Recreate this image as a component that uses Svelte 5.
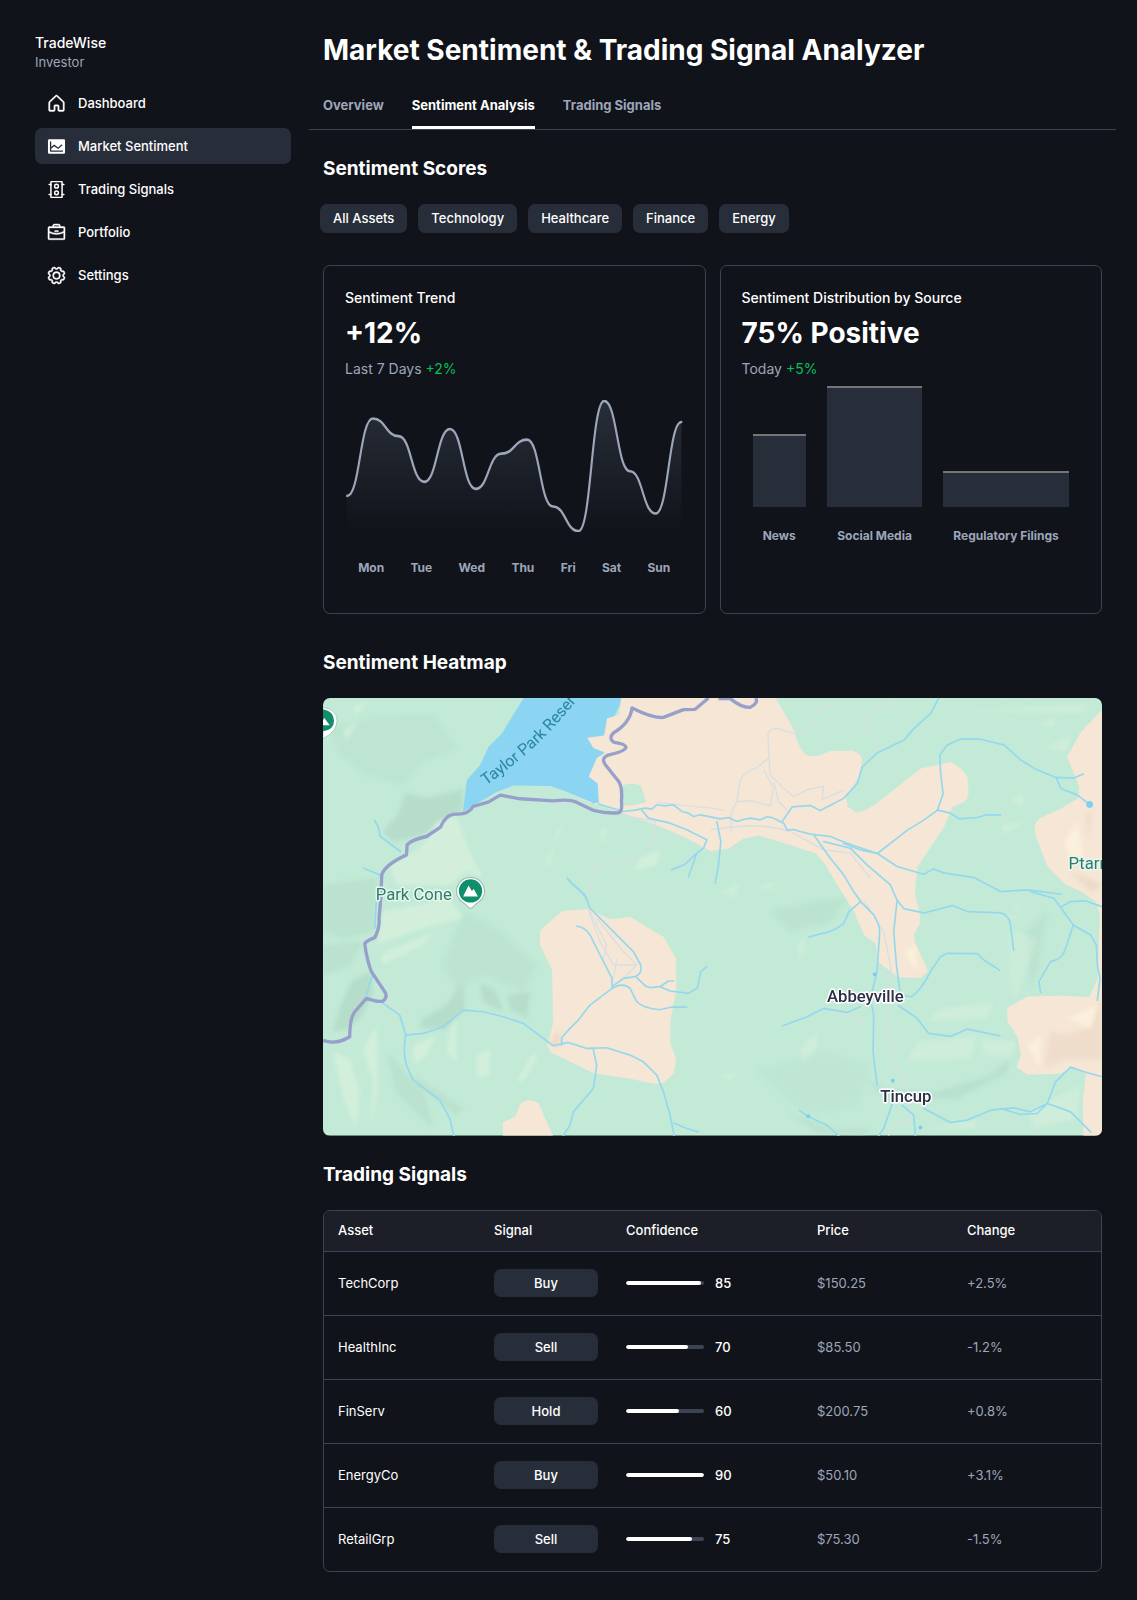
<script>
  const nav = [
    { label: 'Dashboard', icon: 'home' },
    { label: 'Market Sentiment', icon: 'chart', active: true },
    { label: 'Trading Signals', icon: 'traffic' },
    { label: 'Portfolio', icon: 'briefcase' },
    { label: 'Settings', icon: 'gear' },
  ];
  const tabs = ['Overview', 'Sentiment Analysis', 'Trading Signals'];
  const filters = ['All Assets', 'Technology', 'Healthcare', 'Finance', 'Energy'];
  const days = ['Mon', 'Tue', 'Wed', 'Thu', 'Fri', 'Sat', 'Sun'];
  const sources = [
    { label: 'News', height: 60 },
    { label: 'Social Media', height: 100 },
    { label: 'Regulatory Filings', height: 30 },
  ];
  const signals = [
    { asset: 'TechCorp', signal: 'Buy', confidence: 85, price: '$150.25', change: '+2.5%' },
    { asset: 'HealthInc', signal: 'Sell', confidence: 70, price: '$85.50', change: '-1.2%' },
    { asset: 'FinServ', signal: 'Hold', confidence: 60, price: '$200.75', change: '+0.8%' },
    { asset: 'EnergyCo', signal: 'Buy', confidence: 90, price: '$50.10', change: '+3.1%' },
    { asset: 'RetailGrp', signal: 'Sell', confidence: 75, price: '$75.30', change: '-1.5%' },
  ];
  let activeTab = $state('Sentiment Analysis');

  const line =
    'M0 109C18.15 109 18.15 21 36.31 21C54.46 21 54.46 41 72.62 41C90.77 41 90.77 93 108.92 93C127.08 93 127.08 33 145.23 33C163.38 33 163.38 101 181.54 101C199.69 101 199.69 61 217.85 61C236 61 236 45 254.15 45C272.31 45 272.31 121 290.46 121C308.62 121 308.62 149 326.77 149C344.92 149 344.92 1 363.08 1C381.23 1 381.23 81 399.38 81C417.54 81 417.54 129 435.69 129C453.85 129 453.85 25 472 25';
</script>

<div class="page">
  <aside class="sidebar">
    <div class="brand">
      <p class="name">TradeWise</p>
      <p class="role">Investor</p>
    </div>
    <nav>
      {#each nav as item}
        <a href="#{item.icon}" class="nav-item" class:active={item.active}>
          <svg class="icon" viewBox="0 0 256 256" fill="currentColor" stroke="currentColor" aria-hidden="true">
            {#if item.icon === 'home'}
              <path stroke-width="5" d="M218.83,103.77l-80-75.48a1.14,1.14,0,0,1-.11-.11,16,16,0,0,0-21.53,0l-.11.11L37.17,103.77A16,16,0,0,0,32,115.55V208a16,16,0,0,0,16,16H96a16,16,0,0,0,16-16V160h32v48a16,16,0,0,0,16,16h48a16,16,0,0,0,16-16V115.55A16,16,0,0,0,218.83,103.77ZM208,208H160V160a16,16,0,0,0-16-16H112a16,16,0,0,0-16,16v48H48V115.55l.11-.1L128,40l79.9,75.43.11.1Z" />
            {:else if item.icon === 'chart'}
              <path stroke="none" d="M216,40H40A16,16,0,0,0,24,56V200a16,16,0,0,0,16,16H216a16,16,0,0,0,16-16V56A16,16,0,0,0,216,40ZM200,192H56a8,8,0,0,1-8-8V72a8,8,0,0,1,16,0v62.08l30.4-26.6a8,8,0,0,1,10.13-.32l43,32.26,39.2-34.3a8,8,0,1,1,10.54,12l-44,38.5a8,8,0,0,1-10.07.38l-43-32.26L64,155.63V176H200a8,8,0,0,1,0,16Z" />
            {:else if item.icon === 'traffic'}
              <g fill="none" stroke-width="18" stroke-linecap="round" stroke-linejoin="round">
                <rect x="60" y="32" width="136" height="192" rx="6" />
                <circle cx="128" cy="88" r="23" />
                <circle cx="128" cy="168" r="23" />
                <path d="M60 66H38M60 190H38M196 66H218M196 190H218" />
              </g>
            {:else if item.icon === 'briefcase'}
              <path stroke-width="5" d="M216,56H176V48a24,24,0,0,0-24-24H104A24,24,0,0,0,80,48v8H40A16,16,0,0,0,24,72V200a16,16,0,0,0,16,16H216a16,16,0,0,0,16-16V72A16,16,0,0,0,216,56ZM96,48a8,8,0,0,1,8-8h48a8,8,0,0,1,8,8v8H96ZM216,72v41.61A184,184,0,0,1,128,136a184.070,184.070,0,0,1-88-22.380V72Zm0,128H40V131.640A200.190,200.190,0,0,0,128,152a200.250,200.250,0,0,0,88-20.370V200ZM104,112a8,8,0,0,1,8-8h32a8,8,0,0,1,0,16H112A8,8,0,0,1,104,112Z" />
            {:else}
              <path stroke-width="5" d="M128,80a48,48,0,1,0,48,48A48.050,48.050,0,0,0,128,80Zm0,80a32,32,0,1,1,32-32A32,32,0,0,1,128,160Zm88-29.840q.06-2.160,0-4.320l14.920-18.640a8,8,0,0,0,1.480-7.060,107.600,107.600,0,0,0-10.880-26.250,8,8,0,0,0-6-3.930l-23.720-2.640q-1.480-1.560-3-3L186,40.540a8,8,0,0,0-3.940-6,107.290,107.290,0,0,0-26.250-10.860,8,8,0,0,0-7.060,1.480L130.160,40Q128,40,125.840,40L107.200,25.110a8,8,0,0,0-7.060-1.480A107.600,107.600,0,0,0,73.890,34.510a8,8,0,0,0-3.930,6L67.320,64.270q-1.560,1.490-3,3L40.540,70a8,8,0,0,0-6,3.940,107.710,107.710,0,0,0-10.870,26.250,8,8,0,0,0,1.490,7.060L40,125.840Q40,128,40,130.160L25.110,148.800a8,8,0,0,0-1.480,7.060,107.600,107.600,0,0,0,10.880,26.250,8,8,0,0,0,6,3.930l23.720,2.640q1.490,1.560,3,3L70,215.460a8,8,0,0,0,3.940,6,107.710,107.710,0,0,0,26.250,10.870,8,8,0,0,0,7.060-1.490L125.840,216q2.160.06,4.320,0l18.640,14.920a8,8,0,0,0,7.060,1.480,107.210,107.210,0,0,0,26.250-10.880,8,8,0,0,0,3.930-6l2.640-23.720q1.560-1.480,3-3L215.460,186a8,8,0,0,0,6-3.940,107.710,107.710,0,0,0,10.870-26.250,8,8,0,0,0-1.490-7.060Zm-16.100-6.500a73.930,73.930,0,0,1,0,8.680,8,8,0,0,0,1.740,5.480l14.190,17.730a91.570,91.570,0,0,1-6.230,15L187,173.110a8,8,0,0,0-5.100,2.640,74.110,74.110,0,0,1-6.140,6.140,8,8,0,0,0-2.640,5.100l-2.510,22.580a91.320,91.320,0,0,1-15,6.230l-17.740-14.190a8,8,0,0,0-5-1.750h-.48a73.930,73.930,0,0,1-8.680,0,8.060,8.060,0,0,0-5.480,1.740L100.450,215.800a91.570,91.570,0,0,1-15-6.230L82.890,187a8,8,0,0,0-2.640-5.100,74.110,74.110,0,0,1-6.140-6.140,8,8,0,0,0-5.100-2.640L46.430,170.600a91.320,91.320,0,0,1-6.230-15l14.190-17.740a8,8,0,0,0,1.740-5.480,73.930,73.930,0,0,1,0-8.680,8,8,0,0,0-1.740-5.480L40.200,100.450a91.570,91.570,0,0,1,6.230-15L69,82.890a8,8,0,0,0,5.100-2.640,74.110,74.110,0,0,1,6.140-6.140A8,8,0,0,0,82.890,69L85.400,46.430a91.320,91.320,0,0,1,15-6.230l17.740,14.190a8,8,0,0,0,5.480,1.740,73.930,73.930,0,0,1,8.680,0,8.060,8.060,0,0,0,5.480-1.740L155.550,40.200a91.570,91.570,0,0,1,15,6.230L173.110,69a8,8,0,0,0,2.640,5.100,74.110,74.110,0,0,1,6.140,6.140,8,8,0,0,0,5.100,2.640l22.580,2.510a91.320,91.320,0,0,1,6.230,15l-14.190,17.740A8,8,0,0,0,199.870,123.660Z" />
            {/if}
          </svg>
          {item.label}
        </a>
      {/each}
    </nav>
  </aside>

  <main>
    <h1>Market Sentiment &amp; Trading Signal Analyzer</h1>

    <div class="tabs" role="tablist">
      {#each tabs as tab}
        <button
          role="tab"
          class="tab"
          class:selected={tab === activeTab}
          aria-selected={tab === activeTab}
          onclick={() => (activeTab = tab)}>{tab}</button>
      {/each}
    </div>

    <h2>Sentiment Scores</h2>
    <div class="chips">
      {#each filters as filter}
        <button class="chip">{filter}</button>
      {/each}
    </div>

    <div class="cards">
      <section class="card">
        <h3>Sentiment Trend</h3>
        <p class="value">+12%</p>
        <p class="meta">Last 7 Days <span class="up">+2%</span></p>
        <svg class="trend" viewBox="-3 0 478 150" preserveAspectRatio="none" role="img" aria-label="Sentiment trend over the last 7 days">
          <defs>
            <linearGradient id="trend-fill" x1="236" y1="1" x2="236" y2="149" gradientUnits="userSpaceOnUse">
              <stop stop-color="#282e39" />
              <stop offset="1" stop-color="#282e39" stop-opacity="0" />
            </linearGradient>
          </defs>
          <path d="{line}V149H0V109Z" fill="url(#trend-fill)" />
          <path d={line} fill="none" stroke="#9da6b9" stroke-width="3" stroke-linecap="round" />
        </svg>
        <div class="days">
          {#each days as day}<span>{day}</span>{/each}
        </div>
      </section>

      <section class="card">
        <h3>Sentiment Distribution by Source</h3>
        <p class="value">75% Positive</p>
        <p class="meta">Today <span class="up">+5%</span></p>
        <div class="bars">
          {#each sources as source}
            <div class="source">
              <div class="slot"><div class="bar" style:height="{source.height}%"></div></div>
              <span>{source.label}</span>
            </div>
          {/each}
        </div>
      </section>
    </div>

    <h2 class="heatmap-title">Sentiment Heatmap</h2>
    <svg class="map" viewBox="0 0 2334 1311" preserveAspectRatio="xMidYMid slice" role="img" aria-label="Map around Taylor Park Reservoir, Abbeyville and Tincup">
      <defs>
        <filter id="soft" x="-20%" y="-20%" width="140%" height="140%"><feGaussianBlur stdDeviation="7" /></filter>
        <path id="lake-label" d="M488 262Q621 168 696 83T826 -72" />
      </defs>
      <rect width="2334" height="1311" fill="#c2ead7" />

      <g fill="#b3d9c7" filter="url(#soft)" opacity="0.8">
        <path d="M245 285L310 300 420 275 415 340 370 370 300 410 210 430 180 400 225 350Z" />
        <path d="M85 850L140 820 150 880 110 960 70 990 30 1000 50 930Z" />
        <path d="M300 960L370 920 420 850 425 930 370 990 290 990ZM470 850L520 880 540 940 480 910ZM555 890L620 880 610 960 560 930Z" />
        <path d="M0 560L160 540 150 700 60 720 0 700ZM0 740L120 730 80 800 0 830Z" opacity="0.6" />
        <path d="M420 640L520 690 640 800 600 880 480 830 400 880 360 800Z" opacity="0.4" />
        <path d="M190 1060L300 1180 330 1290 220 1180ZM270 1130L420 1230 400 1250 280 1160Z" opacity="0.6" />
        <path d="M20 90L150 60 330 50 400 150 300 190 240 260 130 230 40 160Z" opacity="0.35" />
        <path d="M1340 640L1480 610 1570 600 1520 670 1400 700Z" opacity="0.5" />
        <path d="M1610 1130L1690 1180 1840 1180 2000 1130 2060 1080 2050 1120 1900 1200 1690 1200Z" opacity="0.7" />
        <path d="M1390 1240L1520 1290 1640 1290 1620 1311 1480 1300Z" opacity="0.6" />
        <path d="M2110 700L2170 640 2140 820 2120 880Z" opacity="0.5" />
        <path d="M1300 1120L1500 1060 1640 1100 1600 1220 1450 1250Z" opacity="0.25" />
      </g>
      <g fill="#d8f1dd" filter="url(#soft)" opacity="0.75">
        <path d="M340 370L400 350 430 440 480 540 430 520 380 560 220 560 200 500 290 450Z" />
        <path d="M180 640L380 600 420 660 300 690 160 740ZM170 770L330 700 300 740 180 800Z" />
        <path d="M30 1060L80 1080 110 1180 100 1290 60 1200ZM120 1050L160 980 165 1180 140 1290 150 1150Z" />
        <path d="M380 990L400 960 400 1090 370 1060ZM460 1070L500 1050 500 1130 460 1140ZM580 1150L630 1060 640 1080 600 1150ZM270 1040L340 1010 310 1070 270 1100Z" />
        <path d="M700 420L730 350 700 400 680 500 665 500ZM830 400L850 380 840 440ZM950 480L1010 450 1000 500 930 520Z" />
        <path d="M70 130L110 60 60 100ZM90 30L140 0 100 50Z" />
        <path d="M1880 38L2290 20 2280 45ZM2140 80L2200 55 2190 90ZM2160 150L2240 110 2230 160ZM2060 310L2100 280 2100 330ZM2030 380L2110 370 2040 410Z" opacity="0.7" />
        <path d="M1190 580L1250 550 1230 600ZM1300 560L1370 550 1330 580ZM1200 620L1210 620 1230 670Z" opacity="0.6" />
        <path d="M1850 930L2010 910 1990 960 1810 970ZM1780 1030L1960 1010 1940 1080 1750 1090ZM1970 1020L2080 1030 2060 1080 1980 1070Z" opacity="0.7" />
        <path d="M1420 740L1450 710 1430 800ZM1430 1050L1480 1000 1480 1050 1440 1090ZM1190 1130L1240 1120 1220 1150Z" opacity="0.7" />
        <path d="M2050 690L2140 720 2080 900 2060 880ZM1970 640L2100 620 2080 670ZM2000 640L2140 660 2020 620Z" opacity="0.5" />
        <path d="M1800 1290L1960 1260 1950 1290ZM2110 1240L2270 1160 2260 1260 2130 1290Z" opacity="0.7" />
      </g>

      <path fill="#8bd4f2" d="M601 0L536 106 496 146 471 201 431 246 419 341 455 320 521 281 571 262 681 264 729 280 801 316 840 320 840 120 900 0Z" />
      <g fill="#f5e6d5">
        <path d="M893 0H1356L1406 86 1426 141Q1440 174 1461 174L1481 174 1521 159 1586 158Q1610 165 1616 184L1606 236 1569 296 1571 324 1598 343Q1630 335 1651 321L1721 266 1791 211 1881 192Q1920 212 1931 238L1934 286Q1930 308 1916 314L1886 326 1861 386 1781 506 1773 586 1789 646 1789 676 1771 706 1773 731 1813 818 1791 839 1721 836 1664 791 1656 736 1621 711 1589 636 1541 561 1506 501 1476 466 1401 441 1306 412 1261 421 1216 451 1161 459 1091 421 1011 386 901 346 821 320 729 281 801 316 826 314 823 256 796 236 820 180 846 164 810 150 791 119 842 112 851 61 886 51Z" />
        <path d="M2334 36L2271 101 2229 176 2266 266 2261 301 2211 331 2146 361 2131 381 2136 416 2171 506 2221 556 2281 586 2316 611 2327 650 2321 841 2296 896 2211 891 2111 894 2049 928 2051 971 2081 1016 2091 1071 2078 1106 2111 1129 2211 1126 2241 1106 2286 1126 2276 1206 2278 1311H2334Z" />
        <path d="M651 696L716 638 791 632 861 663 921 656 1021 716 1058 781 1058 876 1041 966 1041 1036 1058 1081 1051 1126 1021 1153 991 1156 921 1141 811 1124 681 1061 671 1041 689 976 686 816 649 736Z" />
        <path d="M539 1311L538 1271 576 1254 591 1216Q616 1195 646 1214L666 1261 689 1311Z" />
      </g>
      <path fill="#c2ead7" d="M896 262Q925 252 952 262L968 312 925 322 893 322Z" />
      <g filter="url(#soft)" fill="#ecd9c6">
        <path d="M2180 1000L2230 1010 2290 990 2334 900 2334 1080 2230 1080 2160 1110Z" opacity="0.7" />
        <path d="M690 1010L710 1000 705 1050 685 1040Z" />
        <path d="M2285 350L2300 340 2295 430ZM2240 520L2334 560 2300 580Z" />
      </g>
      <g filter="url(#soft)" fill="#fbf0dc">
        <path d="M2220 430L2260 370 2280 480 2240 490ZM2230 960L2320 920 2300 990ZM1740 760L1775 740 1780 820ZM2110 1040L2150 1010 2150 1110Z" />
      </g>

      <!-- tracks -->
      <g fill="none" stroke="#d8dfe2" stroke-width="4" stroke-linejoin="round">
        <path d="M680 305L705 335 725 310M896 350L995 370 990 430 930 480 860 500 815 505 800 560 790 600 800 650 830 730 870 800 940 800" />
        <path d="M1000 313L1161 330 1200 336M1161 395Q1300 370 1400 400L1500 455 1580 465 1640 540M1222 400V350L1240 310 1250 245Q1270 215 1295 212L1336 180 1333 105Q1345 88 1370 93L1410 107Q1450 105 1472 85L1475 50 1530 10M1240 310L1285 308 1340 324 1350 270 1320 215M1336 180L1340 230 1380 270 1410 296 1450 275 1500 265 1495 305 1560 275M1352 255L1365 310 1390 335M1676 165L1640 110Q1625 65 1635 38L1720 10" />
        <path d="M1621 606L1680 700 1700 800 1705 880 1690 1000 1720 1110 1760 1190 1760 1270 1740 1270 1700 1280 1695 1311M1500 925L1560 955 1610 960 1615 985M1656 810L1700 830" />
        <path d="M800 640L850 740 840 780M820 660L900 760 940 800 890 850M870 840L880 780M190 900L235 950" />
      </g>

      <!-- rivers -->
      <g fill="none" stroke="#95d8ee" stroke-width="5" stroke-linejoin="round" stroke-linecap="round">
        <path d="M826 318L860 328 900 340 935 336 965 330 985 333 1000 320 1025 323 1050 320 1075 340 1095 345 1110 355 1130 350 1161 356 1190 362 1215 358 1240 370 1260 364 1280 360 1310 365 1330 356 1345 358 1380 375 1391 396 1410 394 1430 400 1460 408 1520 415 1570 435 1661 466" />
        <path d="M955 336L975 360 1040 375 1090 395 1150 425 1140 450 1120 465 1095 535M1120 465L1085 498 1045 515M155 367L165 385 172 415 232 460M122 510L170 530M732 540L750 560 765 572 790 600" />
        <path d="M1376 370L1406 326 1460 322 1490 337 1561 300 1601 256 1616 206 1661 164 1741 126 1771 91 1821 46 1845 0" />
        <path d="M1661 466L1751 396 1800 366 1841 336 1858 286 1850 221 1848 171 1870 141 1911 123 1966 123 2041 141 2091 186 2131 211 2196 238 2250 240 2278 228M2196 238L2211 271 2261 291 2295 318M1841 336L1880 345 1905 362 1960 358 1990 350 2030 350" />
        <path d="M1470 410L1520 480 1560 530 1590 580 1611 610 1576 640 1560 675Q1530 700 1500 704L1456 716M1500 430L1580 450 1630 500 1700 560 1720 606 1740 631 1800 644 1886 622 1930 640 2030 644Q2055 650 2060 680L2069 756" />
        <path d="M1560 436L1610 455 1661 466 1720 505 1800 528 1829 512 1860 524 1950 538 2030 580 2110 575 2212 588M2120 580L2190 600 2248 680 2300 710 2317 740 2320 800 2328 840 2320 906M2210 626L2240 610 2285 608 2334 625M2248 680L2225 750Q2215 785 2180 790L2145 850 2150 882" />
        <path d="M1611 610L1650 650Q1668 680 1668 700L1660 820 1640 900 1650 950 1648 1060 1660 1160M1720 606L1710 700 1718 800 1730 890 1762 895Q1790 880 1820 820L1850 775 1870 765 1960 766 1980 785 2028 816M1725 922L1780 960 1815 1005 1880 1014 1930 992 2028 1012M1610 925L1570 942 1500 930 1450 955 1378 982" />
        <path d="M1711 1200L1680 1290 1665 1311M1735 1220L1770 1250 1775 1311M1800 1230L1880 1272 1930 1265 2000 1235 2070 1228 2120 1240 2170 1215 2195 1150 2240 1106 2280 1120 2334 1135M2030 1230L2090 1248 2140 1245 2170 1215M2170 1215L2240 1240 2300 1300M1428 1236L1455 1255 1510 1280 1545 1311M1180 370L1192 430 1185 500 1175 555" />
        <path d="M735 546L785 590 800 630 850 680 900 730 930 760 952 800Q958 825 935 835L900 840 866 865M760 684Q785 686 800 710L830 770 866 840 866 870 800 920 765 965 740 990 715 1018 715 1040" />
        <path d="M940 838L965 862 980 868 1010 865 1035 848 1050 848M1010 865L1040 878 1095 885 1122 868 1132 820 1150 805M866 870Q900 850 920 870L940 910Q960 930 1010 934L1045 926 1090 926" />
        <path d="M180 915L230 950 248 1010 300 1005 360 985 420 935 480 940 540 955 600 975 690 1042 735 1032 790 1050 850 1048 920 1070 960 1090 1000 1130 1020 1180 1040 1250 1052 1311M248 1010Q238 1060 250 1100L270 1145 350 1205 380 1260 392 1311M810 1054L820 1100 810 1170 750 1240 740 1280 720 1311M1052 1274L1090 1290 1125 1300" />
        <path d="M160 600L155 690M148 830L130 890" />
      </g>
      <g fill="#7fcdf0"><circle cx="2297" cy="319" r="10" /><circle cx="1653" cy="828" r="6" /><circle cx="1707" cy="1147" r="6" /><circle cx="1454" cy="1253" r="6" /><circle cx="1790" cy="1287" r="6" /></g>

      <!-- highway -->
      <g fill="none" stroke="#979fcb" stroke-width="10" stroke-linejoin="round">
        <path d="M0 1026Q40 1040 80 1015 80 960 95 940L130 900Q165 912 180 908 195 895 185 880L145 820Q130 780 125 735 135 725 155 718 170 690 168 660L173 600 176 530Q185 500 250 470L252 440Q265 425 310 415L352 387Q370 345 400 348 435 350 450 325L495 312 531 291 591 302 690 308Q740 302 761 313L811 337Q850 347 885 344 898 340 894 310 898 270 886 250L846 200Q830 178 860 170 905 160 908 148 908 138 870 132 855 120 870 105 920 75 926 30Q990 62 1020 58L1080 35 1115 34 1155 0" />
        <path d="M1185 2L1220 2Q1255 30 1280 28 1305 15 1297 0" />
      </g>

      <text class="water"><textPath href="#lake-label">Taylor Park Reser</textPath></text>
      <g>
        <path d="M0 28Q42 35 42 68 42 100 0 122Z" fill="#fff" stroke="#9db8ad" stroke-width="2" />
        <path d="M0 34Q33 40 33 68 33 95 0 100Z" fill="#0f8f6c" />
        <path d="M0 82V66L4 60 20 82Z" fill="#fff" />
      </g>
      <g>
        <path d="M442 538C466 538 484 556 484 580 484 605 462 612 451 624Q442 636 433 624C422 612 400 605 400 580 400 556 418 538 442 538Z" fill="#fff" stroke="#9db8ad" stroke-width="3" />
        <circle cx="442" cy="578" r="35" fill="#0f8f6c" />
        <path d="M420 595L436 562 446 578 452 572 464 595Z" fill="#fff" />
      </g>
      <text class="place park" x="158" y="604">Park Cone</text>
      <text class="place park" x="2234" y="512">Ptarmigan</text>
      <text class="place" x="1510" y="911">Abbeyville</text>
      <text class="place" x="1670" y="1210">Tincup</text>
    </svg>

    <h2>Trading Signals</h2>
    <div class="table-wrap">
      <table>
        <thead>
          <tr><th>Asset</th><th>Signal</th><th>Confidence</th><th>Price</th><th>Change</th></tr>
        </thead>
        <tbody>
          {#each signals as row}
            <tr>
              <td class="asset">{row.asset}</td>
              <td><button class="signal">{row.signal}</button></td>
              <td>
                <div class="confidence">
                  <div class="track"><div class="fill" style:width="{Math.min(100, row.confidence / 0.88)}%"></div></div>
                  <span>{row.confidence}</span>
                </div>
              </td>
              <td>{row.price}</td>
              <td>{row.change}</td>
            </tr>
          {/each}
        </tbody>
      </table>
    </div>
  </main>
</div>

<style>
  :global(body) {
    background: #11131a;
  }
  .page {
    display: flex;
    gap: 4px;
    box-sizing: border-box;
    min-height: 100vh;
    padding: 18px 21px 28px;
    font-family: Inter, 'Noto Sans', sans-serif;
    font-size: 13px;
    line-height: 19px;
    color: #fff;
    background: #11131a;
  }
  p, h1, h2, h3 {
    margin: 0;
  }
  button {
    border: 0;
    font: inherit;
    color: inherit;
    cursor: pointer;
  }

  .sidebar {
    flex: 0 0 284px;
    box-sizing: border-box;
    padding: 14px;
  }
  .brand {
    margin-bottom: 13px;
  }
  .name {
    font-size: 14px;
    line-height: 21px;
    font-weight: 500;
  }
  .role {
    color: #9da6b9;
  }
  nav {
    display: flex;
    flex-direction: column;
    gap: 7px;
  }
  .nav-item {
    display: flex;
    align-items: center;
    gap: 11px;
    height: 36px;
    padding: 0 11px;
    border-radius: 7px;
    color: #fff;
    font-weight: 500;
    text-decoration: none;
  }
  .nav-item.active {
    background: #282e39;
  }
  .icon {
    width: 21px;
    height: 21px;
  }

  main {
    flex: 1;
    min-width: 0;
  }
  h1 {
    padding: 14px 14px 0;
    font-size: 28px;
    line-height: 36px;
    font-weight: 700;
  }
  .tabs {
    display: flex;
    gap: 28px;
    margin-top: 14px;
    padding: 0 14px;
    border-bottom: 1px solid #3b4354;
  }
  .tab {
    padding: 14px 0 11px;
    border-bottom: 3px solid transparent;
    background: none;
    color: #9da6b9;
    font-weight: 700;
  }
  .tab.selected {
    border-color: #fff;
    color: #fff;
  }
  h2 {
    padding: 27px 14px 0;
    font-size: 19px;
    line-height: 24px;
    font-weight: 700;
  }
  .heatmap-title {
    padding-top: 23px;
  }
  .chips {
    display: flex;
    flex-wrap: wrap;
    gap: 11px;
    padding: 23px 11px 18px;
  }
  .chip {
    height: 29px;
    padding: 0 13px;
    border-radius: 7px;
    background: #282e39;
    font-weight: 500;
  }

  .cards {
    display: grid;
    grid-template-columns: 1fr 1fr;
    gap: 14px;
    padding: 14px;
  }
  .card {
    display: flex;
    flex-direction: column;
    min-height: 305px;
    padding: 21px;
    border: 1px solid #3b4354;
    border-radius: 7px;
  }
  h3 {
    font-size: 14px;
    line-height: 21px;
    font-weight: 500;
  }
  .value {
    margin-top: 7px;
    font-size: 28px;
    line-height: 36px;
    font-weight: 700;
  }
  .meta {
    margin-top: 7px;
    color: #9da6b9;
    font-size: 14px;
    line-height: 21px;
  }
  .up {
    color: #08bf57;
  }
  .trend {
    width: 100%;
    height: 132px;
    margin-top: 21px;
  }
  .days {
    display: flex;
    justify-content: space-around;
    margin-top: 27px;
  }
  .days span,
  .source span {
    color: #9da6b9;
    font-size: 12px;
    line-height: 18px;
    font-weight: 700;
  }
  .bars {
    display: grid;
    grid-auto-flow: column;
    gap: 21px;
    padding: 7px 11px 0;
  }
  .source {
    text-align: center;
  }
  .slot {
    display: flex;
    align-items: flex-end;
    height: 121px;
    margin-bottom: 19px;
  }
  .bar {
    box-sizing: border-box;
    width: 100%;
    border-top: 2px solid #757575;
    background: #282e39;
  }

  .map {
    display: block;
    width: calc(100% - 28px);
    margin: 23px 14px 0;
    border-radius: 7px;
  }
  .place {
    font: 500 50px Roboto, sans-serif;
    fill: #2c2f45;
    stroke: #fff;
    stroke-width: 9px;
    stroke-linejoin: round;
    paint-order: stroke;
  }
  .park {
    font-weight: 400;
    fill: #2f7d69;
    stroke: #e6f6ee;
  }
  .water {
    font: 400 48px Roboto, sans-serif;
    fill: #2c86a2;
  }

  .table-wrap {
    margin: 23px 14px 0;
    overflow: hidden;
    border: 1px solid #3b4354;
    border-radius: 7px;
  }
  table {
    width: 100%;
    table-layout: fixed;
    border-collapse: collapse;
  }
  th,
  td {
    padding: 0 14px;
    text-align: left;
  }
  th {
    height: 40px;
    background: #1c1f27;
    font-weight: 500;
  }
  th:nth-child(1) {
    width: 128px;
  }
  th:nth-child(2) {
    width: 104px;
  }
  th:nth-child(3) {
    width: 163px;
  }
  th:nth-child(4) {
    width: 122px;
  }
  td {
    height: 63px;
    border-top: 1px solid #3b4354;
    color: #9da6b9;
  }
  .asset {
    color: #fff;
  }
  .signal {
    display: block;
    width: 100%;
    height: 28px;
    border-radius: 7px;
    background: #282e39;
    font-weight: 500;
    color: #fff;
  }
  .confidence {
    display: flex;
    align-items: center;
    gap: 11px;
    color: #fff;
    font-weight: 500;
  }
  .track {
    width: 78px;
    height: 4px;
    overflow: hidden;
    border-radius: 2px;
    background: #3b4354;
  }
  .fill {
    height: 100%;
    border-radius: 2px;
    background: #fff;
  }
</style>
